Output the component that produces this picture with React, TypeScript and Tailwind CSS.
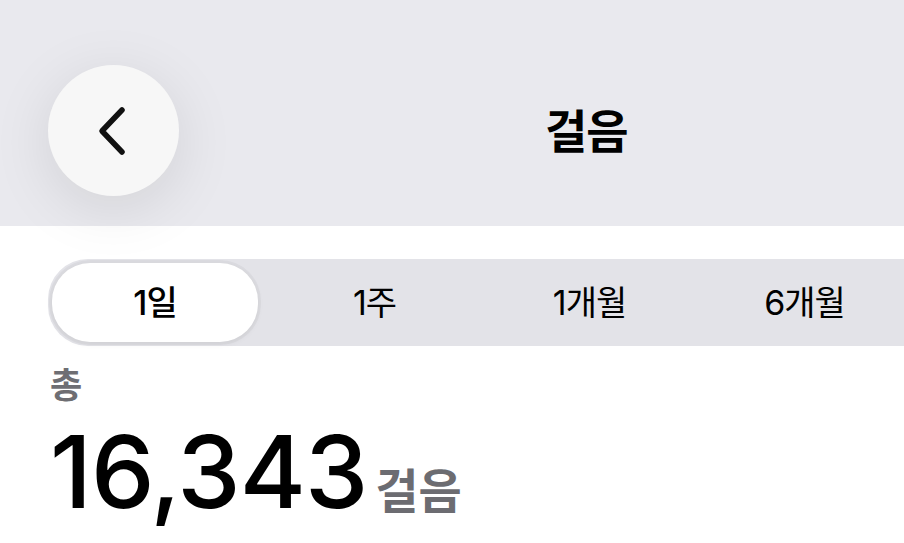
import { useState } from 'react';

const ranges = ['1일', '1주', '1개월', '6개월'];

function BackButton() {
  return (
    <button className="w-[131px] h-[131px] shrink-0 rounded-full bg-[#f7f7f7] flex items-center justify-center shadow-[0_12px_60px_rgba(0,0,0,0.10)]">
      <svg width="34" height="52" viewBox="0 0 34 52" fill="none">
        <path d="M25 5 L5 26 L25 47" stroke="#111" strokeWidth="5.5" strokeLinecap="round" strokeLinejoin="round" />
      </svg>
    </button>
  );
}

export default function App() {
  const [range, setRange] = useState('1일');

  return (
    <div
      className="w-[904px] h-[543px] overflow-hidden bg-white"
      style={{ fontFamily: 'Inter, "Noto Sans CJK KR", sans-serif' }}
    >
      {/* Header */}
      <div className="h-[226px] bg-[#e9e9ee] flex items-start pt-[65px] pl-[48px]">
        <BackButton />
        <h1 className="ml-[366px] h-[131px] flex items-center text-[46px] font-bold text-black leading-none tracking-[-1px]">걸음</h1>
      </div>

      {/* Range picker */}
      <div className="mt-[33px] ml-[48px] w-[900px] h-[87px] rounded-l-[40px] bg-[#e3e3e8] p-[4px] grid grid-cols-[repeat(4,215px)]">
        {ranges.map((r) => {
          const active = r === range;
          return (
            <button
              key={r}
              onClick={() => setRange(r)}
              className={`h-[79px] rounded-[38px] flex items-center justify-center text-[34px] text-black tracking-[-1px] ${
                active ? 'bg-white w-[206px] font-medium shadow-[0_0_0_3px_rgba(0,0,0,0.03),0_2px_6px_rgba(0,0,0,0.06)]' : 'font-normal'
              }`}
            >
              {r}
            </button>
          );
        })}
      </div>

      {/* Total */}
      <div className="pl-[50px] pt-[22px]">
        <p className="text-[35px] leading-none text-[#6e6e73] font-semibold">총</p>
        <div className="mt-[18px] flex items-baseline">
          <span className="text-[101px] leading-none font-medium text-black tracking-[-1px]">16,343</span>
          <span className="ml-[8px] text-[47px] leading-none font-semibold text-[#6c6c71]">걸음</span>
        </div>
      </div>
    </div>
  );
}
